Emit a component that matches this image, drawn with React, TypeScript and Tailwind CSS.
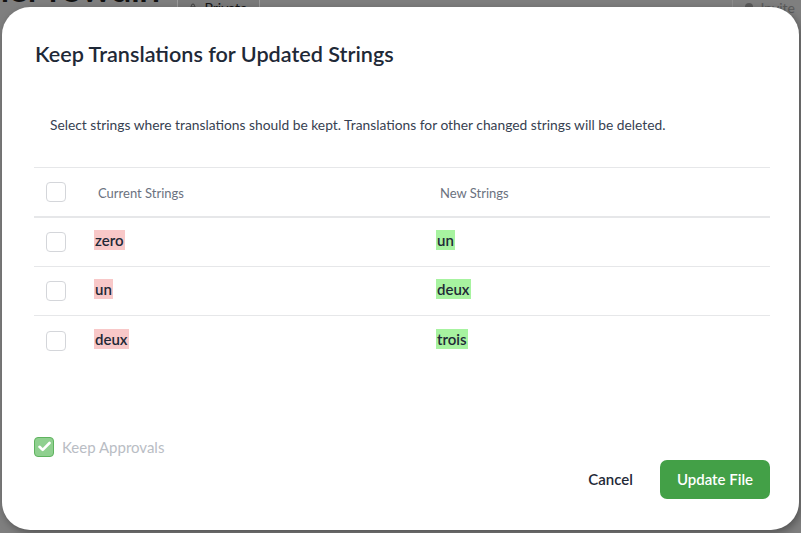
import React from "react";

const font = { fontFamily: "'Source Sans Pro', Lato, 'Noto Sans', sans-serif" };

function Box({ className = "" }: { className?: string }) {
  return <div className={`w-5 h-5 rounded-[4px] border border-[#d4d6da] bg-white shrink-0 ${className}`} />;
}

const rows = [
  ["zero", "un"],
  ["un", "deux"],
  ["deux", "trois"],
];

export default function App() {
  return (
    <div className="relative w-[801px] h-[533px] overflow-hidden bg-[#7f7f7f]" style={font}>
      {/* page underneath */}
      <div className="flex items-end -mt-[30px] h-[37px]">
        <div className="text-[38px] leading-none font-semibold text-[#121212] -ml-[12px] pb-[1px] tracking-tight">ner rowdin</div>
        <div className="ml-[18px] mb-[-14px] flex items-center gap-2 h-[28px] w-[83px] px-3 rounded-md border border-[#9a9a9a] bg-[#7a7a7a] text-[14px] text-[#151515]">
          <svg width="10" height="12" viewBox="0 0 10 12"><rect x="0" y="5" width="10" height="7" rx="1" fill="#3a3a3a" /><path d="M2.5 5V3.5a2.5 2.5 0 015 0V5" stroke="#3a3a3a" strokeWidth="1.6" fill="none" /></svg>
          Private
        </div>
        <div className="ml-auto mr-[-10px] mb-[-14px] flex items-center gap-2 h-[28px] pl-3 pr-4 border-l border-[#8c8c8c] text-[14px] text-[#5a5a5a]">
          <span className="w-2 h-2 rounded-full bg-[#5a5a5a]" />Invite
        </div>
      </div>

      {/* modal */}
      <div className="absolute left-[2px] top-[7px] w-[797px] h-[523px] bg-white rounded-[28px] shadow-[2px_3px_8px_rgba(0,0,0,0.35)] flex flex-col pl-8 pr-[29px] pb-[31px]">
        <h2 className="mt-[33px] ml-[1px] text-[21.6px] leading-[28px] font-semibold text-[#1f2937]">
          Keep Translations for Updated Strings
        </h2>
        <p className="mt-[47px] ml-[16px] text-[13.8px] leading-[20px] text-[#374151]">
          Select strings where translations should be kept. Translations for other changed strings will be deleted.
        </p>

        <div className="mt-[32px]">
          <div className="h-[51px] border-t border-b-2 border-[#e6e7e9] flex items-center">
            <Box className="ml-[12px]" />
            <div className="ml-[32px] mt-[4px] w-[342px] text-[13px] text-[#6b7280]">Current Strings</div>
            <div className="mt-[4px] text-[13px] text-[#6b7280]">New Strings</div>
          </div>
          {rows.map(([a, b], i) => (
            <div key={i} className={`h-[49px] flex items-center ${i < 2 ? "border-b border-[#e6e7e9]" : ""}`}>
              <Box className="ml-[12px]" />
              <div className="ml-[28px] mb-[4px] w-[342px]">
                <span className="bg-[#f8c8c8] px-[1px] py-[1px] text-[15px] leading-[20px] font-semibold text-[#1f2937]">{a}</span>
              </div>
              <div className="mb-[4px]">
                <span className="bg-[#a7f3a0] px-[1px] py-[1px] text-[15px] leading-[20px] font-semibold text-[#1f2937]">{b}</span>
              </div>
            </div>
          ))}
        </div>

        <div className="mt-auto flex items-center gap-2">
          <div className="w-5 h-5 rounded-[4px] border border-[#5fb35f] bg-[#8fd08f] flex items-center justify-center">
            <svg width="13" height="11" viewBox="0 0 13 11"><path d="M1.5 5.8l3.2 3.1L11.5 2" stroke="white" strokeWidth="2.6" fill="none" strokeLinecap="round" strokeLinejoin="round" /></svg>
          </div>
          <span className="text-[15px] text-[#b9bdc4]">Keep Approvals</span>
        </div>
        <div className="mt-[2px] flex items-center justify-end gap-[27px]">
          <button className="text-[15px] font-semibold text-[#1f2937]">Cancel</button>
          <button className="h-[39px] px-[17px] rounded-[7px] bg-[#43a047] text-white text-[15px] font-semibold">Update File</button>
        </div>
      </div>
    </div>
  );
}
